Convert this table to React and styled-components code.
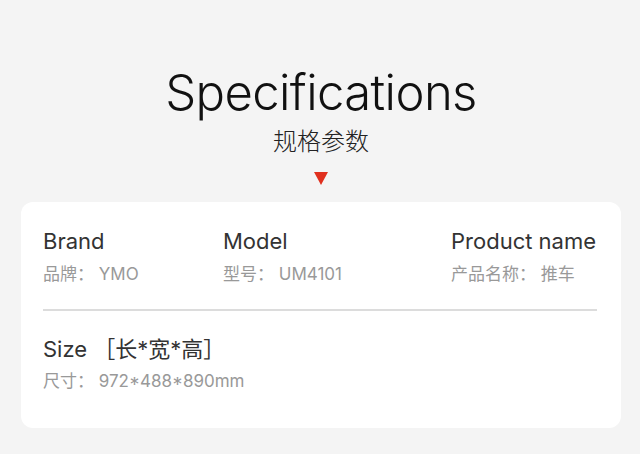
import styled, { createGlobalStyle } from "styled-components";

const Global = createGlobalStyle`
  body {
    margin: 0;
    background: #f4f4f4;
    font-family: Inter, "Noto Sans CJK SC", sans-serif;
  }
`

const Page = styled.div`
  width: 640px;
  height: 454px;
  padding: 63px 19px 0 21px;
  box-sizing: border-box;
  display: flex;
  flex-direction: column;
  align-items: center;
`

const Title = styled.h1`
  margin: 0;
  font-family: Inter, sans-serif;
  font-weight: 300;
  font-size: 49px;
  line-height: 60px;
  color: #111;
  letter-spacing: -0.6px;
`

const Subtitle = styled.div`
  margin-top: 2px;
  font-family: "Noto Sans CJK SC", sans-serif;
  font-weight: 300;
  font-size: 24px;
  line-height: 30px;
  color: #222;
`

const Arrow = styled.div`
  margin-top: 17px;
  width: 0;
  height: 0;
  border-left: 7.5px solid transparent;
  border-right: 7.5px solid transparent;
  border-top: 13px solid #e0301e;
`

const Card = styled.div`
  margin-top: 17px;
  align-self: stretch;
  background: #fff;
  border-radius: 12px;
  padding: 26px 24px 0 22px;
  height: 226px;
  box-sizing: border-box;
`

const Row = styled.div`
  display: grid;
  grid-template-columns: 180px 228px 1fr;
  padding-bottom: 24px;
  border-bottom: 2px solid #dcdcdc;
`

const Item = styled.div`
  display: flex;
  flex-direction: column;
  gap: ${(p) => p.$gap || 9}px;
  padding-top: ${(p) => p.$top || 0}px;
`

const Label = styled.div`
  font-family: Inter, "Noto Sans CJK SC", sans-serif;
  font-size: 22px;
  line-height: 26px;
  color: #333;
`

const Value = styled.div`
  font-family: Inter, "Noto Sans CJK SC", sans-serif;
  font-size: 17px;
  line-height: 22px;
  color: #999;
  white-space: pre;
`

const specs = [
  { label: "Brand", value: "品牌： YMO" },
  { label: "Model", value: "型号： UM4101" },
  { label: "Product name", value: "产品名称： 推车" },
]

export default function App() {
  return (
    <Page>
      <Global />
      <Title>Specifications</Title>
      <Subtitle>规格参数</Subtitle>
      <Arrow />
      <Card>
        <Row>
          {specs.map((s) => (
            <Item key={s.label}>
              <Label>{s.label}</Label>
              <Value>{s.value}</Value>
            </Item>
          ))}
        </Row>
        <Item $top={25} $gap={8}>
          <Label>Size ［长*宽*高］</Label>
          <Value>尺寸： 972*488*890mm</Value>
        </Item>
      </Card>
    </Page>
  )
}
